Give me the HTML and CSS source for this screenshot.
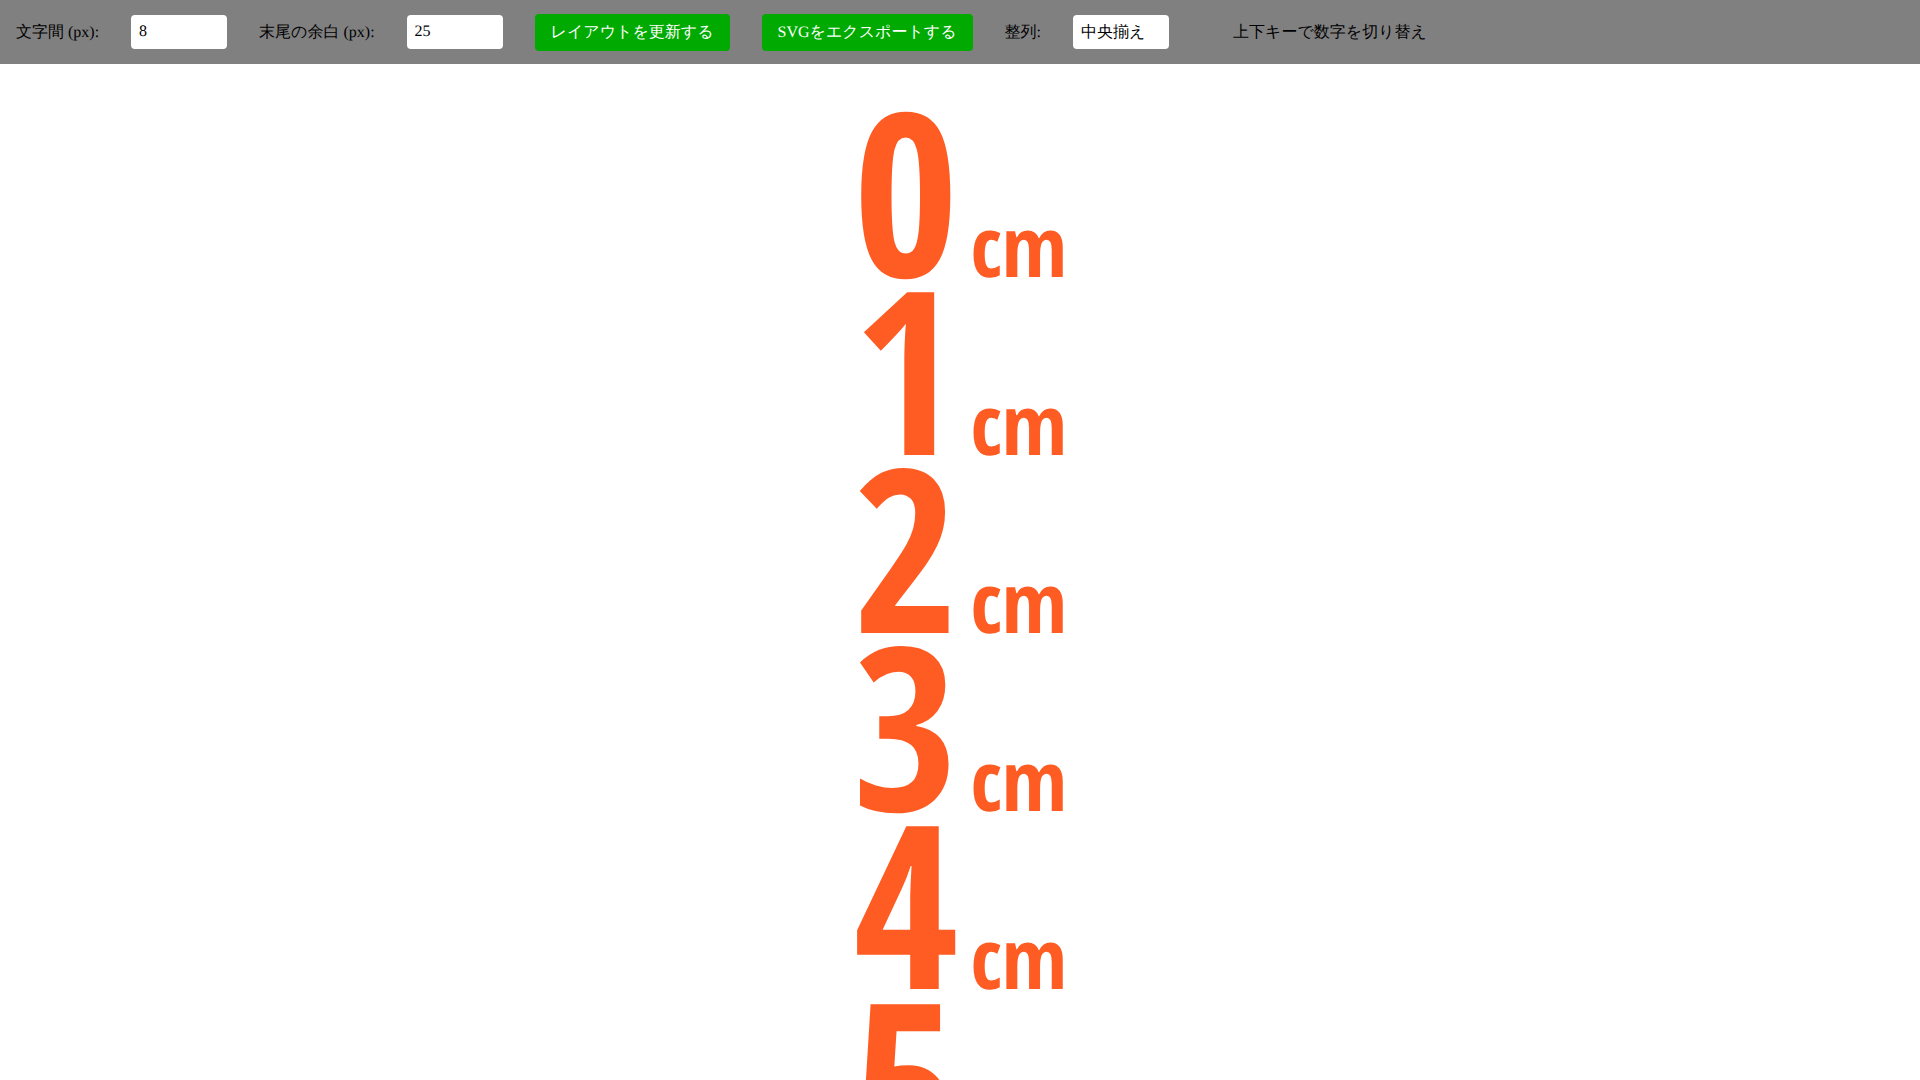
FILE: index.html
```
<!DOCTYPE html>
<html lang="ja">
<head>
<meta charset="utf-8">
<title>SVGレイアウト</title>
<link rel="stylesheet" href="styles.css">
</head>
<body>
<form class="toolbar">
  <label for="spacing">文字間 (px):</label>
  <input id="spacing" class="field" type="text" value="8">
  <label for="trailing">末尾の余白 (px):</label>
  <input id="trailing" class="field" type="text" value="25">
  <button class="action" type="button">レイアウトを更新する</button>
  <button class="action" type="button">SVGをエクスポートする</button>
  <label for="align">整列:</label>
  <select id="align" class="field">
    <option>左揃え</option>
    <option selected>中央揃え</option>
    <option>右揃え</option>
  </select>
  <span class="hint">上下キーで数字を切り替え</span>
</form>
<main class="canvas">
  <div class="row"><span class="digit">0</span><span class="unit">cm</span></div>
  <div class="row"><span class="digit">1</span><span class="unit">cm</span></div>
  <div class="row"><span class="digit">2</span><span class="unit">cm</span></div>
  <div class="row"><span class="digit">3</span><span class="unit">cm</span></div>
  <div class="row"><span class="digit">4</span><span class="unit">cm</span></div>
  <div class="row"><span class="digit">5</span><span class="unit">cm</span></div>
</main>
</body>
</html>
```
FILE: styles.css
```
* { box-sizing: border-box; }
body {
  margin: 0;
  height: 100vh;
  overflow: hidden;
  display: flex;
  flex-direction: column;
  background: #fff;
  color: #000;
  font: 16px "Liberation Serif", serif;
  text-rendering: geometricPrecision;
}
.toolbar {
  flex: none;
  min-height: 64px;
  padding: 0 16px;
  display: flex;
  align-items: center;
  gap: 32px;
  background: #808080;
}
.field {
  width: 96px;
  height: 34px;
  padding: 0 8px;
  border: 0;
  border-radius: 4px;
  background: #fff;
  color: #000;
  font: inherit;
  text-rendering: inherit;
  appearance: none;
}
.action {
  height: 37px;
  padding: 0 16px;
  border: 0;
  border-radius: 4px;
  background: #00aa00;
  color: #fff;
  font: inherit;
  text-rendering: inherit;
}
.hint { margin-left: 32px; }
.canvas {
  flex: 1;
  min-height: 0;
  overflow: hidden;
  padding-top: 36px;
  color: #ff5c24;
  font-family: "Open Sans Condensed", "Roboto Condensed", "Liberation Sans", sans-serif;
  font-weight: 700;
}
.row {
  height: 178px;
  display: flex;
  justify-content: center;
  align-items: baseline;
  gap: 12px;
  line-height: 178px;
}
.digit { font-size: 228px; }
.unit { font-size: 84px; }
```
